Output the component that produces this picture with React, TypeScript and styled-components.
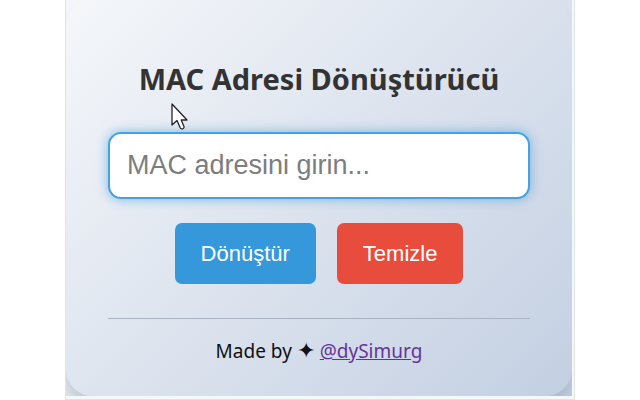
import React, { useState } from "react";
import styled, { createGlobalStyle } from "styled-components";

const GlobalStyle = createGlobalStyle`
  * { box-sizing: border-box; }
  body {
    margin: 0;
    background: #fff;
    color: #111;
    font-family: "Segoe UI", "Noto Sans", sans-serif;
  }
`;

const Frame = styled.div`
  position: relative;
  max-width: 510px;
  margin: 0 auto;
  padding: 0 2px 3px 0;
  border: 1px solid #dde5e2;
  border-top: 0;
  background: #f3f9f8;
`;

const Backdrop = styled.div`
  overflow: hidden;
  background: linear-gradient(135deg, #f3f6fa, #c3cfe2);
`;

const Card = styled.main`
  padding: 57px 42px 31px;
  border-radius: 27px;
  background: linear-gradient(135deg, #f5f7fa, #c3cfe2);
  box-shadow: 0 10px 12px rgba(0, 0, 0, 0.1);
  text-align: center;
`;

const Title = styled.h1`
  margin: 0 0 31px;
  color: #333;
  font-size: 29px;
  line-height: 44px;
`;

const AddressInput = styled.input`
  display: block;
  width: 100%;
  padding: 15px 17px 16px;
  border: 2px solid #45a2e2;
  border-radius: 13px;
  outline: 0;
  background: #fff;
  box-shadow: 0 0 12px rgba(52, 152, 219, 0.6);
  color: #333;
  font: 27px/32px "Liberation Sans", Arial, sans-serif;

  &::placeholder {
    color: #7d7d7d;
    opacity: 1;
  }
`;

const Actions = styled.div`
  display: flex;
  justify-content: center;
  gap: 21px;
  margin: 24px 0 34px;
`;

const Button = styled.button<{ $tone: string }>`
  padding: 17px 26px;
  border: 0;
  border-radius: 7px;
  background: ${({ $tone }) => $tone};
  color: #fff;
  font: 22px/27px "Liberation Sans", Arial, sans-serif;
`;

const Footer = styled.footer`
  padding-top: 18px;
  border-top: 1px solid #a9b2c1;
  font-size: 19px;
  line-height: 28px;
`;

const Star = styled.span`
  font-size: 22px;
  line-height: 20px;
`;

const ProfileLink = styled.a`
  color: #663399;
`;

const Pointer = styled.svg`
  position: absolute;
  top: 103px;
  left: 105px;
  pointer-events: none;
`;

const App: React.FC = () => {
  const [address, setAddress] = useState("");

  const convert = () => {
    const digits = address.replace(/[^0-9a-f]/gi, "").toUpperCase();
    setAddress((digits.match(/.{1,2}/g) ?? []).join(":"));
  };

  return (
    <>
      <GlobalStyle />
      <Frame>
        <Backdrop>
          <Card>
            <Title>MAC Adresi Dönüştürücü</Title>
            <AddressInput
              type="text"
              aria-label="MAC adresi"
              placeholder="MAC adresini girin..."
              value={address}
              onChange={(event) => setAddress(event.target.value)}
            />
            <Actions>
              <Button type="button" $tone="#3498db" onClick={convert}>
                Dönüştür
              </Button>
              <Button type="button" $tone="#e74c3c" onClick={() => setAddress("")}>
                Temizle
              </Button>
            </Actions>
            <Footer>
              Made by <Star>✦</Star> <ProfileLink href="#dySimurg">@dySimurg</ProfileLink>
            </Footer>
          </Card>
        </Backdrop>
        <Pointer width="18" height="28" viewBox="0 0 18 28" aria-hidden="true">
          <path
            d="M1 1V22L6 17.5L9.2 24.8Q10.2 26.6 12.2 25.5Q13.4 24.8 13 23.5L10.2 17H16L1 1Z"
            fill="#fff"
            stroke="#22242c"
            strokeWidth="1.3"
            strokeLinejoin="round"
          />
        </Pointer>
      </Frame>
    </>
  );
};

export default App;
